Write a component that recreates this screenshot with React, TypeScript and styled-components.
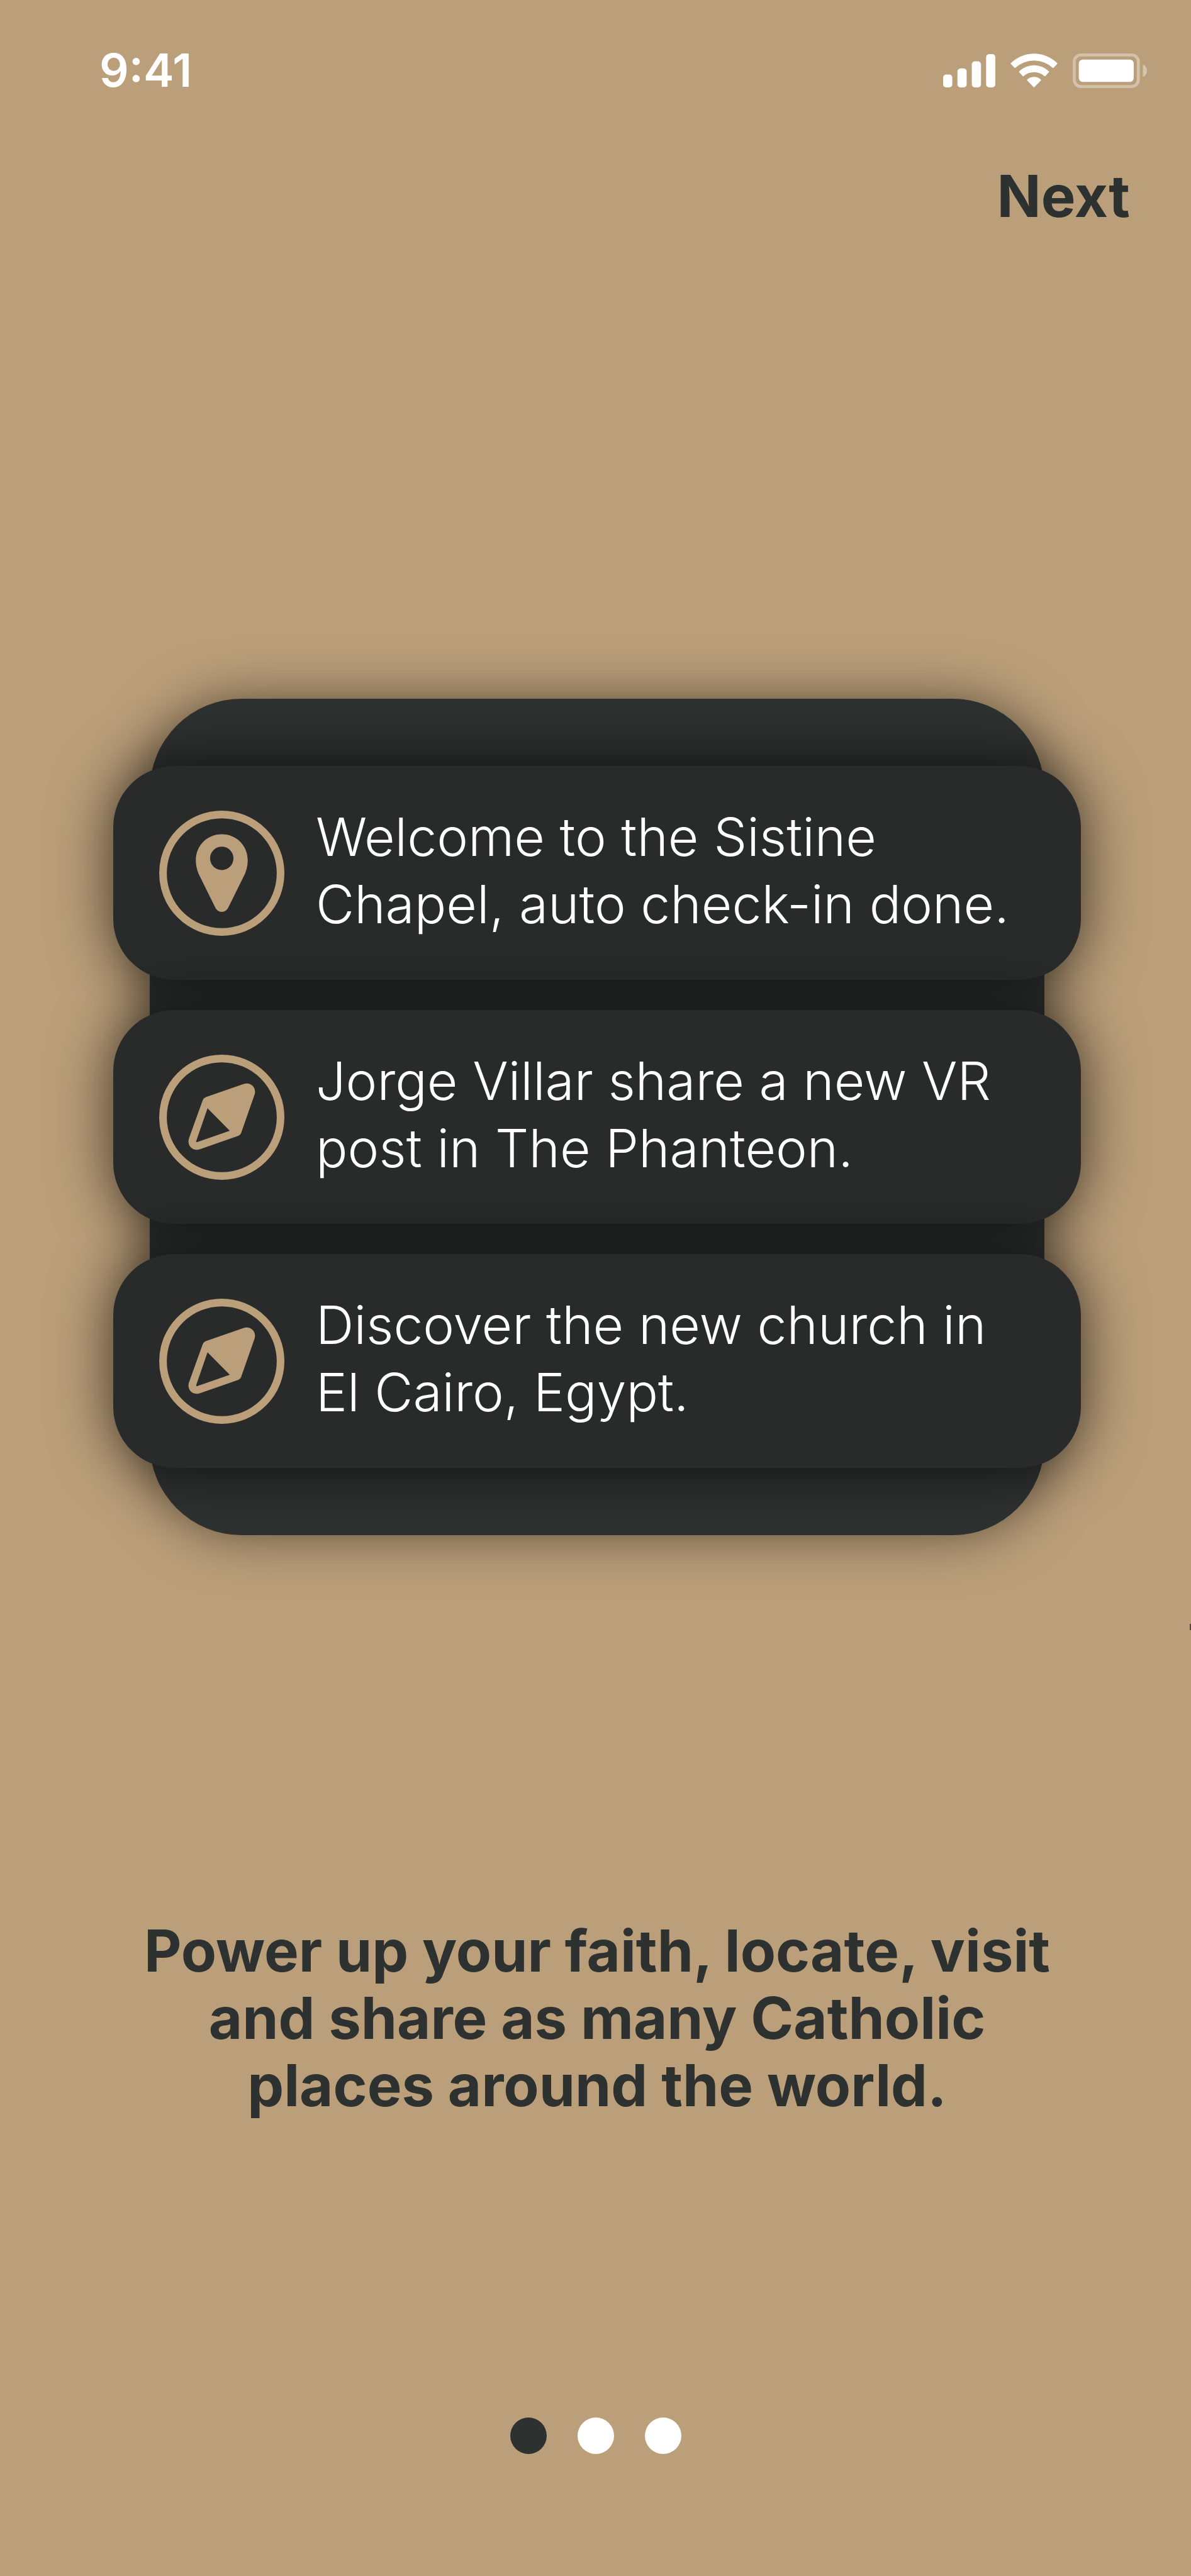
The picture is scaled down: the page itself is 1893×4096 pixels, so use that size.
import React from "react";
import styled, { createGlobalStyle } from "styled-components";

const colors = {
  sand: "#bb9f7a",
  ink: "#2d312f",
  card: "#292b2a",
  white: "#ffffff",
};

const GlobalStyle = createGlobalStyle`
  *, *::before, *::after { box-sizing: border-box; }
  body {
    margin: 0;
    background: ${colors.sand};
    font-family: Inter, "Open Sans", sans-serif;
  }
`;

const Screen = styled.div`
  position: relative;
  display: flex;
  flex-direction: column;
  min-height: 100vh;
  overflow: hidden;
  background: ${colors.sand};
  color: ${colors.ink};
`;

const StatusBar = styled.header`
  display: flex;
  align-items: center;
  justify-content: space-between;
  padding: 68px 70px 0 158px;
`;

const Clock = styled.time`
  font-size: 73px;
  line-height: 88px;
  font-weight: 600;
  color: ${colors.white};
`;

const StatusIcons = styled.div`
  display: flex;
  align-items: center;
  gap: 24px;
`;

const TopNav = styled.nav`
  display: flex;
  justify-content: flex-end;
  padding: 102px 97px 0;
`;

const NextButton = styled.button`
  padding: 0;
  border: 0;
  background: none;
  color: ${colors.ink};
  font: inherit;
  font-size: 92px;
  line-height: 107px;
  font-weight: 700;
  cursor: pointer;
`;

const Main = styled.main`
  display: flex;
  flex-direction: column;
  padding: 746px 175px 0 180px;
`;

const Panel = styled.ul`
  display: flex;
  flex-direction: column;
  gap: 48px;
  margin: 0 58px;
  padding: 107px 0;
  list-style: none;
  border-radius: 146px;
  background: ${colors.ink};
  box-shadow: 0 0 84px rgba(0, 0, 0, 0.5);
`;

const Notice = styled.li`
  display: flex;
  align-items: center;
  gap: 50px;
  height: 340px;
  margin: 0 -58px;
  padding: 0 73px;
  border-radius: 97px;
  background: ${colors.card};
  box-shadow: 0 0 97px rgba(0, 0, 0, 0.66);
`;

const NoticeIcon = styled.svg`
  flex: none;
  width: 199px;
  height: 199px;
  color: ${colors.sand};
`;

const NoticeText = styled.p`
  margin: 0;
  padding-bottom: 8px;
  font-size: 84px;
  line-height: 107px;
  font-weight: 300;
  white-space: nowrap;
  color: ${colors.white};
`;

const Headline = styled.h1`
  margin: 607px 0 0;
  font-size: 92px;
  line-height: 107px;
  font-weight: 700;
  text-align: center;
  white-space: nowrap;
`;

const Pager = styled.div`
  display: flex;
  justify-content: center;
  gap: 49px;
  margin-top: auto;
  padding-bottom: 194px;
`;

const Dot = styled.button<{ $active?: boolean }>`
  width: 58px;
  height: 58px;
  padding: 0;
  border: 0;
  border-radius: 50%;
  background: ${(p) => (p.$active ? colors.ink : colors.white)};
  cursor: pointer;
`;

const NextSlidePeek = styled.span`
  position: absolute;
  top: 2582px;
  right: 0;
  width: 2px;
  height: 10px;
  background: #4a4a4c;
`;

const Signal = () => (
  <svg width="83" height="53" viewBox="0 0 102 65" fill="#fff" aria-hidden="true">
    <rect x="0" y="40" width="18" height="25" rx="6" />
    <rect x="28" y="28" width="18" height="37" rx="6" />
    <rect x="56" y="14" width="18" height="51" rx="6" />
    <rect x="84" y="0" width="18" height="65" rx="6" />
  </svg>
);

const Wifi = () => (
  <svg width="75" height="55" viewBox="0 0 92 68" fill="#fff" aria-hidden="true">
    <path d="M.6 18.9A65 65 0 0 1 91.4 18.9Q92.3 19.8 91.4 20.7L84.3 28.2Q83.4 29.1 82.5 28.2A54 54 0 0 0 9.5 28.2Q8.6 29.1 7.7 28.2L.6 20.7Q-.3 19.8 .6 18.9Z" />
    <path d="M16.7 35.1A42 42 0 0 1 75.3 35.1Q76.2 36 75.3 36.9L68.2 44.4Q67.3 45.3 66.4 44.4A31 31 0 0 0 25.6 44.4Q24.7 45.3 23.8 44.4L16.7 36.9Q15.8 36 16.7 35.1Z" />
    <path d="M32.6 51.2A20 20 0 0 1 59.4 51.2Q60.4 52.2 59.4 53.2L46.8 66Q46 66.8 45.2 66L32.6 53.2Q31.6 52.2 32.6 51.2Z" />
  </svg>
);

const Battery = () => (
  <svg width="118" height="55" viewBox="0 0 146 68" fill="#fff" aria-hidden="true">
    <rect x="3" y="3" width="126" height="62" rx="13" fill="none" stroke="#fff" strokeWidth="6" opacity=".36" />
    <path d="M138 22A13 13 0 0 1 138 46Z" opacity=".4" />
    <rect x="12" y="12" width="108" height="44" rx="8" />
  </svg>
);

const PinIcon = () => (
  <NoticeIcon viewBox="0 0 246 246" fill="currentColor" aria-hidden="true">
    <circle cx="123" cy="123" r="115.5" fill="none" stroke="currentColor" strokeWidth="15" />
    <path
      fillRule="evenodd"
      d="M123 46.5C94 46.5 72 69 72 98C72 107 74 115 77.2 123.6L109.7 189.5C112.5 195.5 117 199 123 199S133.5 195.5 136.3 189.5L168.8 123.6C172 115 174 107 174 98C174 69 152 46.5 123 46.5ZM123 70.7A23 23 0 1 1 123 116.7A23 23 0 1 1 123 70.7Z"
    />
  </NoticeIcon>
);

const CompassIcon = () => (
  <NoticeIcon viewBox="0 0 246 246" fill="currentColor" aria-hidden="true">
    <circle cx="123" cy="123" r="115.5" fill="none" stroke="currentColor" strokeWidth="15" />
    <path
      fillRule="evenodd"
      d="M91.5 83.5L166.3 57.5C179.5 53 191.8 65 187.5 78.3L160.8 154.5Q159.3 158 155.7 159.5L79.5 186C66 190.5 54 178.5 58.5 164.8L85.5 89.5Q87 85.2 91.5 83.5ZM95 105.3L72.7 170Q72.2 172.5 74.7 171.7L138.7 149.7Z"
    />
  </NoticeIcon>
);

const notices = [
  { Icon: PinIcon, lines: ["Welcome to the Sistine", "Chapel, auto check-in done."] },
  { Icon: CompassIcon, lines: ["Jorge Villar share a new VR", "post in The Phanteon."] },
  { Icon: CompassIcon, lines: ["Discover the new church in", "El Cairo, Egypt."] },
];

export default function App() {
  return (
    <Screen>
      <GlobalStyle />
      <StatusBar>
        <Clock>9:41</Clock>
        <StatusIcons>
          <Signal />
          <Wifi />
          <Battery />
        </StatusIcons>
      </StatusBar>
      <TopNav>
        <NextButton type="button">Next</NextButton>
      </TopNav>
      <Main>
        <Panel>
          {notices.map(({ Icon, lines }) => (
            <Notice key={lines[0]}>
              <Icon />
              <NoticeText>
                {lines[0]}
                <br />
                {lines[1]}
              </NoticeText>
            </Notice>
          ))}
        </Panel>
        <Headline>
          Power up your faith, locate, visit
          <br />
          and share as many Catholic
          <br />
          places around the world.
        </Headline>
      </Main>
      <Pager>
        <Dot type="button" $active aria-label="Slide 1" />
        <Dot type="button" aria-label="Slide 2" />
        <Dot type="button" aria-label="Slide 3" />
      </Pager>
      <NextSlidePeek />
    </Screen>
  );
}
